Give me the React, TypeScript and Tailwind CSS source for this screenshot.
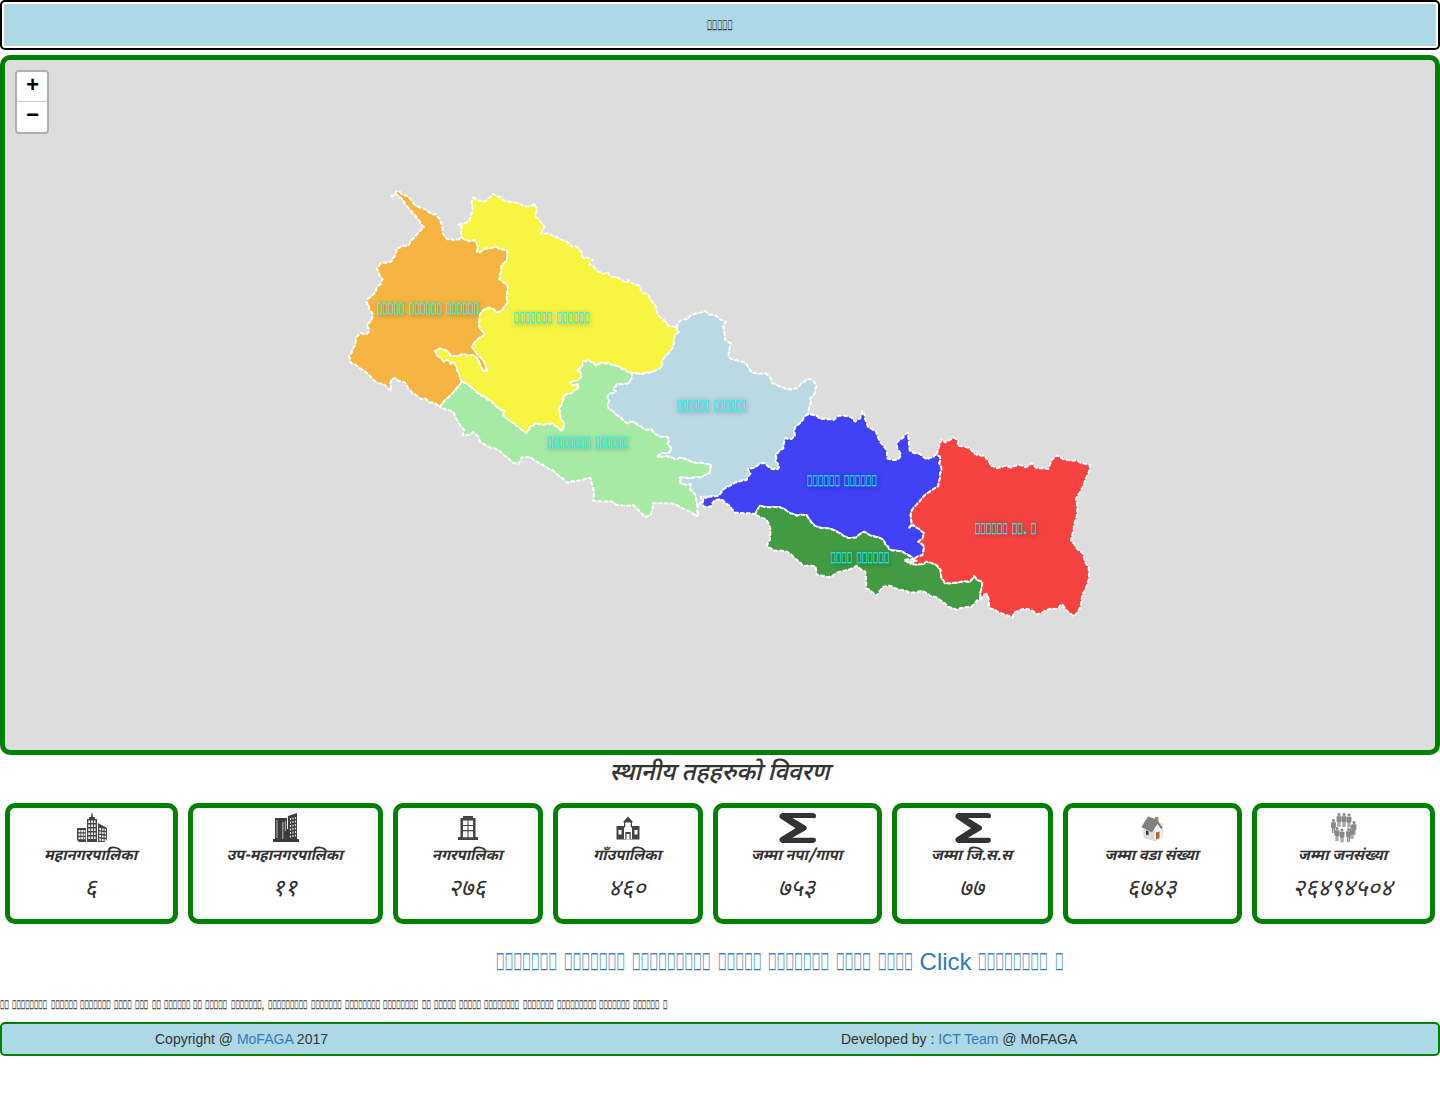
import React from "react";

// Province borders; shared borders are stored once and reused in either direction.
const orangeYellow =
  "365,172 385,182 405,180 411,190 411,215 420,217 430,208 450,204 468,200 483,208 503,212 502,228 497,245 485,255 480,285 478,297 490,307 503,317 502,335 503,368 492,380 488,393 470,399 460,388 445,383 430,390 420,402 418,425 420,445 435,459 420,472 400,492 397,500 408,518 425,535 438,560 444,572 430,575 425,565 415,540 400,526 385,528 365,523 345,529 330,525 320,512 300,505 285,512 290,525 312,545 322,540 332,552 342,545 350,560 358,582 366,605";
const orangeGreen = "366,605 350,625 330,648 300,680";
const orangeOuter =
  "300,680 285,670 270,668 255,655 240,655 225,643 210,630 200,615 185,605 175,603 168,594 152,600 150,612 154,634 135,615 115,610 98,598 80,578 60,565 45,553 32,548 27,528 38,510 46,495 48,472 62,459 80,462 88,450 80,435 92,425 98,402 88,390 88,375 79,362 95,350 108,333 110,322 122,312 128,298 118,285 110,265 122,250 145,248 158,240 165,228 170,205 185,197 205,197 215,180 232,162 252,142 240,125 225,105 210,90 195,72 190,60 178,48 165,42 158,50 155,47 165,40 174,33 185,42 200,48 212,58 228,78 242,84 262,92 275,101 288,102 296,112 304,130 308,160 322,178 340,181 357,178 365,172";
const yellowGreen =
  "366,605 385,615 400,625 410,637 435,652 455,665 475,685 492,693 490,708 510,723 530,738 545,750 560,760 570,740 588,731 610,735 635,730 650,740 668,752 674,735 662,715 657,685 668,665 675,645 695,640 716,625 712,610 697,615 690,607 702,603 715,600 725,590 722,578 712,572 728,558 730,542 748,541 760,548 770,557 785,548 805,549 820,556 840,562 855,568 868,578 875,580";
const yellowLight =
  "875,580 905,583 930,578 955,568 965,560 965,545 985,520 1000,500 1002,470 1018,455 1010,443";
const yellowOuter =
  "1010,443 985,438 970,418 952,402 945,375 930,358 925,343 908,340 900,318 885,310 872,308 865,300 855,307 845,297 830,290 815,290 805,278 790,282 775,275 765,265 748,253 760,240 745,234 730,234 725,218 710,200 695,200 680,185 660,178 640,170 620,160 603,160 612,140 600,122 585,105 590,85 583,70 570,78 550,78 530,68 510,65 490,60 470,48 457,42 450,52 435,65 415,62 400,52 395,75 398,95 390,120 375,130 355,135 365,138 365,172";
const greenLight =
  "875,580 875,595 865,610 830,613 822,625 828,635 810,640 802,650 808,660 802,675 810,688 830,705 850,720 862,730 882,724 895,735 915,748 935,748 950,765 960,770 985,772 982,792 995,808 985,820 970,818 953,830 980,828 1005,837 1020,832 1055,845 1085,848 1113,853 1108,880 1085,892 1050,895 1018,893 1022,910 1052,912 1050,928 1068,948 1073,980";
const greenOuter =
  "1073,980 1070,995 1078,1002 1070,1010 1050,995 1005,972 970,970 938,970 937,990 930,1008 915,1012 900,995 880,975 850,977 830,975 815,964 760,962 762,935 755,910 750,893 710,903 680,908 650,882 625,865 590,845 570,830 545,832 535,852 520,850 505,835 475,810 455,805 420,785 415,770 400,755 385,765 367,765 373,750 348,715 342,698 320,690 305,685 300,680";
const lightOuter =
  "1010,443 1015,430 1025,420 1045,418 1050,408 1070,400 1095,393 1105,403 1128,407 1140,418 1158,425 1150,440 1155,480 1172,490 1165,530 1185,540 1215,548 1225,565 1235,578 1275,580 1290,592 1295,608 1320,620 1340,628 1370,625 1385,608 1400,597 1418,600 1430,615 1425,640 1410,655 1412,670 1405,703";
const lightBlue =
  "1405,703 1395,708 1385,725 1365,742 1365,768 1355,777 1335,775 1330,805 1308,825 1308,845 1317,862 1305,868 1288,862 1275,850 1260,850 1245,863 1223,867 1232,880 1220,900 1195,905 1170,917 1150,928 1135,948 1105,950";
const lightTail = "1105,950 1082,950 1085,965 1073,980";
const blueSouth =
  "1105,950 1090,958 1088,975 1092,980 1115,978 1125,960 1145,958 1170,978 1185,998 1215,1000 1245,1003";
const blueMadhesh =
  "1245,1003 1252,990 1260,977 1282,982 1320,982 1350,1000 1370,1007 1400,1005 1415,1028 1435,1042 1465,1045 1500,1060 1525,1074 1550,1072 1573,1055 1595,1068 1625,1076 1637,1095 1648,1110 1685,1114 1710,1128 1720,1138";
const blueRed =
  "1720,1138 1748,1125 1753,1100 1735,1085 1748,1075 1753,1060 1735,1045 1720,1035 1708,1043 1715,1032 1712,1005 1722,982 1755,945 1795,918 1800,895 1805,870 1798,850 1800,830 1790,822";
const blueNorth =
  "1790,822 1780,832 1760,838 1740,822 1710,812 1707,785 1702,758 1690,772 1672,785 1672,805 1683,825 1670,840 1642,835 1640,810 1620,785 1608,755 1585,742 1575,715 1567,692 1560,715 1545,725 1535,712 1510,707 1490,710 1480,720 1460,718 1440,717 1430,708 1405,703";
const redOuter =
  "1790,822 1795,810 1805,778 1815,787 1830,780 1842,773 1855,782 1855,798 1890,805 1905,822 1935,827 1945,840 1952,858 1970,865 1995,857 2015,863 2035,855 2055,862 2075,850 2090,865 2125,867 2135,840 2152,826 2170,838 2195,842 2210,840 2225,850 2250,855 2243,885 2233,910 2218,940 2208,957 2212,985 2205,1025 2200,1055 2193,1082 2210,1105 2230,1122 2235,1145 2246,1160 2247,1195 2238,1225 2225,1255 2222,1280 2202,1310 2180,1292 2167,1273 2155,1285 2135,1285 2115,1292 2090,1303 2075,1292 2050,1287 2022,1298 2017,1312 1998,1305 1975,1297 1950,1285 1947,1265 1942,1243 1930,1245 1920,1260";
const redMadhesh =
  "1920,1260 1922,1235 1927,1205 1912,1200 1902,1188 1890,1205 1855,1207 1815,1210 1805,1195 1802,1170 1785,1152 1758,1145 1750,1152 1720,1153 1712,1148 1730,1142";
const madheshOuter =
  "1920,1260 1908,1265 1895,1280 1875,1282 1850,1290 1825,1280 1800,1260 1770,1247 1745,1232 1710,1238 1680,1230 1650,1217 1630,1220 1610,1247 1595,1235 1578,1225 1576,1175 1550,1157 1530,1168 1490,1178 1465,1192 1430,1185 1425,1158 1390,1158 1365,1135 1340,1115 1305,1112 1280,1100 1290,1080 1292,1050 1278,1018 1245,1003";

const rev = (s: string) => s.split(" ").reverse().join(" ");

type Point = [number, number];

// Adds small kinks along each edge. The offset depends only on the edge's midpoint,
// so a border shared by two provinces gets the same kinks on both sides.
function roughen(points: string): string {
  const pts = points.split(" ").map((p) => p.split(",").map(Number) as Point);
  const out: Point[] = [];
  pts.forEach(([x1, y1], i) => {
    out.push([x1, y1]);
    const [x2, y2] = pts[(i + 1) % pts.length];
    const length = Math.hypot(x2 - x1, y2 - y1);
    if (length < 9) return;
    const mx = (x1 + x2) / 2;
    const my = (y1 + y2) / 2;
    const n = Math.sin(mx * 12.9898 + my * 78.233) * 43758.5453;
    const m = Math.sin(mx * 39.346 + my * 11.135) * 24634.6345;
    const k = 5;
    out.push([mx + (n - Math.floor(n) - 0.5) * k, my + (m - Math.floor(m) - 0.5) * k]);
  });
  return out.map((p) => p.join(",")).join(" ");
}

const ring = (...parts: string[]) => roughen(parts.join(" "));

const provinces = [
  { fill: "#f6b542", points: ring(orangeGreen, orangeOuter, orangeYellow) },
  { fill: "#f7f542", points: ring(rev(orangeYellow), rev(yellowOuter), rev(yellowLight), rev(yellowGreen)) },
  { fill: "#a6eaa6", points: ring(yellowGreen, greenLight, greenOuter, rev(orangeGreen)) },
  { fill: "#bbd9e3", points: ring(lightOuter, lightBlue, lightTail, rev(greenLight), yellowLight) },
  { fill: "#4141f5", points: ring(blueSouth, blueMadhesh, blueRed, blueNorth, lightBlue) },
  { fill: "#429b42", points: ring(blueMadhesh, "1692,1140 1710,1152", rev(redMadhesh), madheshOuter) },
  { fill: "#f74242", points: ring(redOuter, redMadhesh, blueRed) },
];

const BOX = "\uEFFD";

// Words made of glyphs that the page's font lacks; each number is a word length.
// The font's box glyph is 0.75em wide and is condensed to 0.365em.
function Boxes({ words }: { words: number[] }) {
  return (
    <>
      {words.map((n, i) => (
        <React.Fragment key={i}>
          {i > 0 && " "}
          <span
            className="inline-block origin-left scale-x-[0.4867] whitespace-nowrap [-webkit-text-stroke:0.3px_currentColor]"
            style={{ marginRight: `${-n * 0.385}em` }}
          >
            {BOX.repeat(n)}
          </span>
        </React.Fragment>
      ))}
    </>
  );
}

const labels = [
  { text: <Boxes words={[5, 6, 6]} />, x: 423, y: 249 },
  { text: <Boxes words={[7, 6]} />, x: 546, y: 258 },
  { text: <Boxes words={[8, 6]} />, x: 582, y: 383 },
  { text: <Boxes words={[6, 6]} />, x: 706, y: 346 },
  { text: <Boxes words={[6, 6]} />, x: 837, y: 421 },
  { text: <Boxes words={[4, 6]} />, x: 855, y: 498 },
  {
    text: (
      <>
        <Boxes words={[6, 2]} />. <Boxes words={[1]} />
      </>
    ),
    x: 1001,
    y: 469,
  },
];

function TowersIcon() {
  return (
    <svg width="32" height="30" viewBox="0 0 32 30" fill="#444">
      <path d="M1 15h9v14H4q-3 0-3-4z" />
      <path d="M11 6h2V4h2l.6-4h.8l.6 4h2v2h2v23H11z" />
      <path d="M22 10l9 5v10q0 4-4 4h-5z" />
      <g fill="#eee">
        {[17, 20.5, 24].map((y) => (
          <path key={y} d={`M2.500 ${y}h2v2.300h-2zM5.200 ${y}h2v2.300h-2zM7.800 ${y}h1.600v2.300H7.800z`} />
        ))}
        {[7.5, 11.5, 15.5, 19.5, 23.5].map((y) => (
          <path key={y} d={`M12.300 ${y}h1.800v2.600h-1.800zM15.200 ${y}h1.800v2.600h-1.800zM18 ${y}h1.600v2.600H18z`} />
        ))}
        {[15, 18.5, 22, 25.5].map((y) => (
          <path key={y} d={`M23.200 ${y}h1.800v2.200h-1.800zM25.900 ${y + 0.4}h1.800v2.200h-1.800zM28.500 ${y + 0.8}h1.500v2h-1.500z`} />
        ))}
      </g>
    </svg>
  );
}
function OfficeIcon() {
  return (
    <svg width="28" height="30" viewBox="0 0 28 30" fill="#3c3c3c">
      <path d="M3 5h12v11h1V3l9-3v26h2v3H1v-3h2z" />
      <path d="M5 7v18M10.800 9v17M13.300 8v10" stroke="#bbb" strokeWidth="1" />
      <g stroke="#ddd" strokeWidth="1.200" strokeDasharray="2 1.500">
        <path d="M18.500 5v20M21 4.500v20M23.500 4v21" />
      </g>
    </svg>
  );
}
function WindowIcon() {
  return (
    <svg width="30" height="30" viewBox="0 0 30 30">
      <path d="M10 3h10v2h2.500v19H25v3H5v-3h2.500V5H10z" fill="#444" />
      <path
        d="M10 7.500h4.500v4.500H10zM15.500 7.500H20v4.500h-4.500zM10 13h4.500v4H10zM15.500 13H20v4h-4.500zM10 18.200h4.500v6H10zM15.500 18.200H20v6h-4.500z"
        fill="#f4f4f4"
      />
    </svg>
  );
}
function HallIcon() {
  return (
    <svg width="30" height="30" viewBox="0 0 30 30">
      <path d="M15 3.500l5 5.500h-1v4h7.500v13.500h-23V13H11V9h-1z" fill="#444" />
      <path d="M12.300 9.500h5.400v5h1.300v11.500h-1.300V19h-5.400v7H11V14.500h1.300z" fill="#fff" />
      <path d="M12.300 14h5.400v5h-5.400zM13.500 21h3v5.500h-3z" fill="#fff" />
      <path d="M5.500 17h3v4.500h-3zM21.500 17h3v4.500h-3z" fill="#fff" />
    </svg>
  );
}
function SigmaIcon({ width }: { width: number }) {
  return (
    <svg width={width} height="30" viewBox="0 0 36 30" preserveAspectRatio="none">
      <path
        d="M3 0H32.500Q36 0 36 3T33 5Q31.500 5 29 5H13L26.200 13Q28 15 26.200 17L13 24.800H29Q31.500 24.800 33 24.800Q36 24.500 36 27T32.500 30H3Q-1.500 27.500 1.500 24.500L16 15.200L1.500 5.500Q-1.500 2.500 3 0z"
        fill="#333"
      />
    </svg>
  );
}
function HouseIcon() {
  return (
    <svg width="30" height="30" viewBox="0 0 30 30">
      <path d="M5 14l4-4 9 9v9.500L5.500 25z" fill="#dcdcdc" />
      <path d="M16 19l7-9 1.500 1v13L16 28z" fill="#f2f2f2" stroke="#c8c8c8" strokeWidth=".5" />
      <path d="M17 4h3.500v5L17 8z" fill="#c98b55" />
      <path d="M3.500 14L10 3.500l9 3 5.500 8-1.500 1.500-3.500-5L14 19.500z" fill="#808080" />
      <path d="M18 19.500l3.500-1v6.500L18 26.500z" fill="#a8692c" />
      <path d="M8 17.500l2.500.8v4L8 21.500z" fill="#333" />
    </svg>
  );
}
function PeopleIcon() {
  const people = [
    [8, 0], [13, 0], [18, 0.5], [2.5, 6], [23, 8], [6, 14], [11, 15.5], [17.5, 15], [21, 12],
  ];
  return (
    <svg width="30" height="30" viewBox="0 0 30 30" fill="#888">
      {people.map(([x, y], i) => (
        <g key={i} transform={`translate(${x} ${y})`}>
          <circle cx="2" cy="1.500" r="1.500" />
          <path d="M-.4 3.200h4.800v5.500h-.9v5.300H2.300v-4.500h-.6V14H.5V8.700h-.9z" />
        </g>
      ))}
    </svg>
  );
}

const cards = [
  { w: "w-[173px]", label: "महानगरपालिका", value: "६", icon: <TowersIcon /> },
  { w: "w-[195px]", label: "उप-महानगरपालिका", value: "११", icon: <OfficeIcon /> },
  { w: "w-[150px]", label: "नगरपालिका", value: "२७६", icon: <WindowIcon /> },
  { w: "w-[150px]", label: "गाँउपालिका", value: "४६०", icon: <HallIcon /> },
  { w: "w-[169px]", label: "जम्मा नपा/गापा", value: "७५३", icon: <SigmaIcon width={37} /> },
  { w: "w-[161px]", label: "जम्मा जि.स.स", value: "७७", icon: <SigmaIcon width={36} /> },
  { w: "w-[179px]", label: "जम्मा वडा संख्या", value: "६७४३", icon: <HouseIcon /> },
  { w: "w-[183px]", label: "जम्मा जनसंख्या", value: "२६४९४५०४", icon: <PeopleIcon /> },
];

export default function App() {
  return (
    <div className="h-[1096px] overflow-hidden bg-white font-['Liberation_Sans',Arial,sans-serif] text-sm leading-5 text-[#333]">
      <header className="h-[50px] rounded-[5px] border-2 border-black p-0.5">
        <div className="flex h-full items-center justify-center border border-[#ccc] bg-[#add8e6]">
          <Boxes words={[5]} />
        </div>
      </header>

      <main className="relative mt-[5px] h-[700px] overflow-hidden rounded-[10px] border-[5px] border-[#008000] bg-[#ddd]">
        <svg className="block h-[690px] w-[1430px]" viewBox="-1005 -360 4290 2070">
          {provinces.map((p) => (
            <polygon
              key={p.fill}
              points={p.points}
              fill={p.fill}
              stroke="#fff"
              strokeWidth="6"
              strokeDasharray="9"
              strokeLinejoin="round"
              strokeLinecap="round"
            />
          ))}
        </svg>
        {labels.map((l, i) => (
          <span
            key={i}
            className="absolute -translate-x-1/2 -translate-y-1/2 text-[15px] leading-5 font-bold whitespace-nowrap text-[#00ffff] [text-shadow:2px_1px_8px_#000]"
            style={{ left: l.x, top: l.y }}
          >
            {l.text}
          </span>
        ))}
        <div className="absolute top-[10px] left-[10px] w-[34px] rounded-[4px] border-2 border-black/20 bg-clip-padding text-center font-['Liberation_Mono',monospace] text-[22px] font-bold text-black">
          <div className="h-[30px] rounded-t-[2px] border-b border-[#ccc] bg-white indent-px leading-[29px]">+</div>
          <div className="h-[30px] rounded-b-[2px] bg-white indent-px leading-[29px]">−</div>
        </div>
      </main>

      <h3 className="flex h-[48px] items-start justify-center pt-[6px] pr-[1px] font-['Noto_Sans_Devanagari','Noto_Sans',sans-serif] text-2xl leading-[26px] font-medium italic [-webkit-text-stroke:0.15px_#333]">
        स्थानीय तहहरुको विवरण
      </h3>

      <section className="flex gap-[10px] px-[5px]">
        {cards.map((c) => (
          <div
            key={c.label}
            className={`flex h-[121px] flex-none flex-col items-center rounded-[10px] border-[5px] border-[#008000] pt-[5px] font-['Noto_Sans_Devanagari','Noto_Sans',sans-serif] italic ${c.w}`}
          >
            {c.icon}
            <div className="mt-[4px] mr-[2px] text-[15px] leading-5 font-bold tracking-[-0.1px] whitespace-nowrap">
              {c.label}
            </div>
            <div className="mt-[10px] mr-[2px] text-2xl leading-[26px] font-normal">{c.value}</div>
          </div>
        ))}
      </section>

      <div className="mt-[25px] pl-[120px] text-center text-2xl leading-[26px] text-[#337ab7]">
        <a>
          <Boxes words={[7, 7, 9, 5, 7, 4, 4]} /> Click <Boxes words={[8, 1]} />
        </a>
      </div>

      <p className="mt-[20px] text-xs leading-5 whitespace-nowrap">
        <Boxes words={[2, 8, 6, 7, 4, 3, 2, 6, 2, 5, 7]} />, <Boxes words={[9, 7, 8, 8, 2, 5, 5, 8, 7, 9, 7, 6, 1]} />
      </p>

      <footer className="mt-[7px] flex h-[34px] items-center rounded-[5px] border-2 border-[#008000] bg-[#add8e6]">
        <div className="w-[686px] pl-[153px]">
          Copyright @ <a className="text-[#337ab7]">MoFAGA</a> 2017
        </div>
        <div className="pl-[153px]">
          Developed by : <a className="text-[#337ab7]">ICT Team</a> @ MoFAGA
        </div>
      </footer>
    </div>
  );
}
